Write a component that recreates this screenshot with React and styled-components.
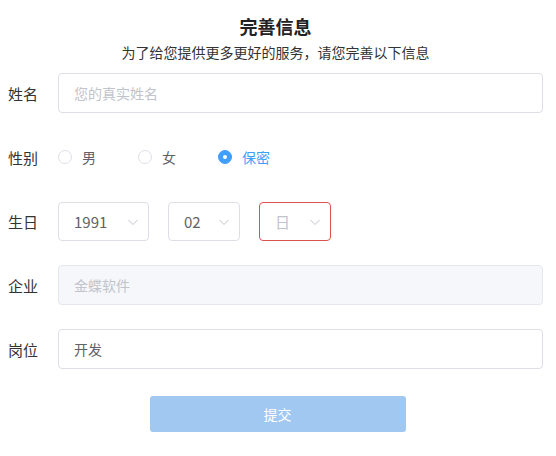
import styled, { createGlobalStyle, css } from "styled-components";

const GlobalStyle = createGlobalStyle`
  body {
    margin: 0;
    background: #fff;
    font-family: "Noto Sans CJK SC", "Liberation Sans", sans-serif;
  }
`;

const Page = styled.div`
  width: 556px;
  box-sizing: border-box;
  padding: 15px 13px 0 8px;
`;

const Header = styled.div`
  text-align: center;
  margin-bottom: 11px;
`;

const Title = styled.div`
  font-size: 18px;
  line-height: 22px;
  font-weight: 700;
  color: #222;
`;

const Subtitle = styled.div`
  margin-top: 5px;
  font-size: 14px;
  line-height: 20px;
  color: #333;
`;

// full-width comma, kept at a full em like the reference
const Punct = styled.span`
  display: inline-block;
  width: 1em;
  text-align: left;
`;

const Form = styled.div`
  display: flex;
  flex-direction: column;
  gap: 24px;
`;

const Row = styled.div`
  display: flex;
  align-items: center;
  height: 40px;
`;

const Label = styled.div`
  width: 50px;
  flex-shrink: 0;
  font-size: 15px;
  color: #333;
`;

const Input = styled.input`
  flex: 1;
  height: 40px;
  box-sizing: border-box;
  border: 1px solid #dcdfe6;
  border-radius: 4px;
  padding: 0 15px;
  font-family: inherit;
  font-size: 14px;
  color: #606266;
  background: #fff;
  outline: none;
  &::placeholder {
    color: #c0c4cc;
  }
  &:disabled {
    background: #f5f7fa;
    border-color: #e4e7ed;
    color: #c0c4cc;
  }
`;

const RadioGroup = styled.div`
  display: flex;
  align-items: center;
`;

const RadioOption = styled.label`
  width: 80px;
  display: flex;
  align-items: center;
  gap: 10px;
  font-size: 14px;
  color: ${(p) => (p.checked ? "#409eff" : "#606266")};
`;

const RadioCircle = styled.span`
  width: 14px;
  height: 14px;
  box-sizing: border-box;
  border-radius: 50%;
  border: 1px solid #dcdfe6;
  background: #fff;
  display: flex;
  align-items: center;
  justify-content: center;
  ${(p) =>
    p.checked &&
    css`
      border-color: #409eff;
      background: #409eff;
      &::after {
        content: "";
        width: 4px;
        height: 4px;
        border-radius: 50%;
        background: #fff;
      }
    `}
`;

const Selects = styled.div`
  display: flex;
  align-items: center;
  gap: 19px;
`;

const Select = styled.div`
  width: ${(p) => p.width}px;
  height: 39px;
  margin-top: 1px;
  box-sizing: border-box;
  border: 1px solid ${(p) => (p.error ? "#d9534f" : "#dcdfe6")};
  border-radius: 4px;
  padding: 0 9px 0 15px;
  display: flex;
  align-items: center;
  justify-content: space-between;
  font-size: 15px;
  color: ${(p) => (p.placeholder ? "#c0c4cc" : "#606266")};
`;

const Chevron = () => (
  <svg width="12" height="12" viewBox="0 0 12 12">
    <path d="M1.5 4 L6 8.5 L10.5 4" fill="none" stroke="#c0c4cc" strokeWidth="1" />
  </svg>
);

const Actions = styled.div`
  display: flex;
  justify-content: center;
  padding-left: 4px;
  margin-top: 27px;
`;

const SubmitButton = styled.button`
  width: 256px;
  height: 36px;
  border: none;
  border-radius: 3px;
  background: #a0c8f0;
  color: #fff;
  font-family: inherit;
  font-size: 14px;
`;

const genders = ["男", "女", "保密"];

export default function App() {
  return (
    <Page>
      <GlobalStyle />
      <Header>
        <Title>完善信息</Title>
        <Subtitle>
          为了给您提供更多更好的服务<Punct>，</Punct>请您完善以下信息
        </Subtitle>
      </Header>
      <Form>
        <Row>
          <Label>姓名</Label>
          <Input placeholder="您的真实姓名" />
        </Row>
        <Row>
          <Label>性别</Label>
          <RadioGroup>
            {genders.map((g) => (
              <RadioOption key={g} checked={g === "保密"}>
                <RadioCircle checked={g === "保密"} />
                {g}
              </RadioOption>
            ))}
          </RadioGroup>
        </Row>
        <Row>
          <Label>生日</Label>
          <Selects>
            <Select width={91}>
              1991
              <Chevron />
            </Select>
            <Select width={72}>
              02
              <Chevron />
            </Select>
            <Select width={72} error placeholder>
              日
              <Chevron />
            </Select>
          </Selects>
        </Row>
        <Row>
          <Label>企业</Label>
          <Input value="金蝶软件" disabled readOnly />
        </Row>
        <Row>
          <Label>岗位</Label>
          <Input defaultValue="开发" />
        </Row>
      </Form>
      <Actions>
        <SubmitButton>提交</SubmitButton>
      </Actions>
    </Page>
  );
}
